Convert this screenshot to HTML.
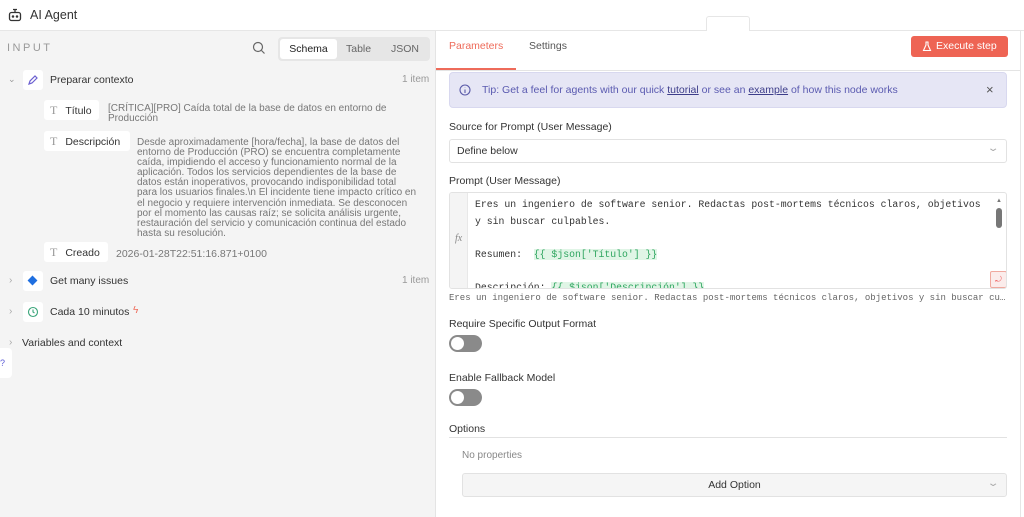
<!DOCTYPE html>
<html><head><meta charset="utf-8"><style>
*{box-sizing:border-box;margin:0;padding:0}
body{width:1024px;height:517px;overflow:hidden;background:#fff;font-family:"Liberation Sans",sans-serif;color:#444;position:relative;font-size:11px}
.a{position:absolute}
.tag{position:absolute;background:#fff;border-radius:3px;height:20px;font-size:10.5px;color:#333;line-height:20px;padding-left:6px}
.tag i{font-style:normal;color:#999;font-family:"Liberation Serif",serif;font-size:12px;margin-right:8px}
.mono{font-family:"Liberation Mono",monospace}
.tog{position:absolute;width:33px;height:17px;border-radius:9px;background:#8a8a8a}
.tog:after{content:"";position:absolute;left:2px;top:2px;width:13px;height:13px;border-radius:50%;background:#fff}
.lbl{position:absolute;left:449px;font-size:10.5px;color:#333}
</style></head><body>
<div class="a" style="left:0;top:0;width:1024px;height:31px;border-bottom:1px solid #e6e6e6;background:#fff"></div>
<svg class="a" style="left:8px;top:8px" width="14" height="14" viewBox="0 0 14 14" fill="none" stroke="#333" stroke-width="1.3"><rect x="1.5" y="4.5" width="11" height="8" rx="2"/><path d="M7 4.5V2M5 1.5h4"/><circle cx="5" cy="8.5" r=".6" fill="#333"/><circle cx="9" cy="8.5" r=".6" fill="#333"/></svg>
<div class="a" style="left:30px;top:8px;font-size:12.5px;color:#333">AI Agent</div>
<div class="a" style="left:706px;top:16px;width:44px;height:15px;border:1px solid #e6e6e6;border-bottom:none;background:#fff;border-radius:3px 3px 0 0"></div>
<div class="a" style="left:0;top:31px;width:436px;height:486px;background:#f4f4f4;border-right:1px solid #e4e4e4"></div>
<div class="a" style="left:7px;top:42px;font-size:11px;letter-spacing:2.5px;color:#9a9a9a">INPUT</div>
<svg class="a" style="left:252px;top:41px" width="14" height="14" viewBox="0 0 14 14" fill="none" stroke="#666" stroke-width="1.2"><circle cx="6" cy="6" r="4.5"/><path d="M9.5 9.5l3 3"/></svg>
<div class="a" style="left:278px;top:37px;width:152px;height:24px;background:#e6e6e6;border-radius:4px"></div>
<div class="a" style="left:280px;top:39px;width:57px;height:20px;background:#fff;border-radius:3px;font-size:10.5px;color:#222;text-align:center;line-height:20px">Schema</div>
<div class="a" style="left:346px;top:43px;font-size:10.5px;color:#666">Table</div>
<div class="a" style="left:391px;top:43px;font-size:10.5px;color:#666">JSON</div>

<div class="a" style="left:8px;top:74px;font-size:9px;color:#999">⌄</div>
<div class="a" style="left:23px;top:70px;width:20px;height:20px;background:#fff;border-radius:3px"></div>
<svg class="a" style="left:27px;top:74px" width="12" height="12" viewBox="0 0 12 12" fill="none" stroke="#6b5fd0" stroke-width="1.2"><path d="M2 10l1-3 5-5 2 2-5 5z"/></svg>
<div class="a" style="left:50px;top:74px;font-size:10.5px;color:#333">Preparar contexto</div>
<div class="a" style="left:402px;top:74px;font-size:10px;color:#999">1 item</div>

<div class="tag" style="left:44px;top:100px;width:55px"><i>T</i>Título</div>
<div class="a" style="left:108px;top:104px;width:300px;font-size:10px;line-height:10px;color:#777">[CRÍTICA][PRO] Caída total de la base de datos en entorno de Producción</div>
<div class="tag" style="left:44px;top:131px;width:86px"><i>T</i>Descripción</div>
<div class="a" style="left:137px;top:138px;width:280px;font-size:10px;line-height:10.1px;color:#777">Desde aproximadamente [hora/fecha], la base de datos del entorno de Producción (PRO) se encuentra completamente caída, impidiendo el acceso y funcionamiento normal de la aplicación. Todos los servicios dependientes de la base de datos están inoperativos, provocando indisponibilidad total para los usuarios finales.\n El incidente tiene impacto crítico en el negocio y requiere intervención inmediata. Se desconocen por el momento las causas raíz; se solicita análisis urgente, restauración del servicio y comunicación continua del estado hasta su resolución.</div>
<div class="tag" style="left:44px;top:242px;width:64px"><i>T</i>Creado</div>
<div class="a" style="left:116px;top:248px;font-size:10.5px;color:#777">2026-01-28T22:51:16.871+0100</div>

<div class="a" style="left:9px;top:275px;font-size:10px;color:#aaa">›</div>
<div class="a" style="left:23px;top:271px;width:20px;height:20px;background:#fff;border-radius:3px"></div>
<div class="a" style="left:29px;top:277px;width:7px;height:7px;background:#1f6fe0;transform:rotate(45deg)"></div>
<div class="a" style="left:50px;top:275px;font-size:10.5px;color:#333">Get many issues</div>
<div class="a" style="left:402px;top:275px;font-size:10px;color:#999">1 item</div>

<div class="a" style="left:9px;top:306px;font-size:10px;color:#aaa">›</div>
<div class="a" style="left:23px;top:302px;width:20px;height:20px;background:#fff;border-radius:3px"></div>
<svg class="a" style="left:27px;top:306px" width="12" height="12" viewBox="0 0 12 12" fill="none" stroke="#3aa57a" stroke-width="1.1"><circle cx="6" cy="6" r="4.5"/><path d="M6 3.5V6l1.5 1"/></svg>
<div class="a" style="left:50px;top:306px;font-size:10.5px;color:#333">Cada 10 minutos</div>
<div class="a" style="left:133px;top:305px;font-size:10px;color:#ee6b5a">ϟ</div>

<div class="a" style="left:9px;top:337px;font-size:10px;color:#aaa">›</div>
<div class="a" style="left:22px;top:337px;font-size:10.5px;color:#333">Variables and context</div>
<div class="a" style="left:0;top:348px;width:12px;height:30px;background:#fff;border-radius:0 4px 4px 0;color:#5b5bd6;font-size:9px;line-height:30px">?</div>

<div class="a" style="left:1020px;top:31px;width:1px;height:486px;background:#e6e6e6"></div>
<div class="a" style="left:436px;top:70px;width:584px;height:1px;background:#e4e4e4"></div>
<div class="a" style="left:449px;top:40px;font-size:10.5px;color:#ee6b5a">Parameters</div>
<div class="a" style="left:436px;top:68px;width:80px;height:2px;background:#ee6b5a"></div>
<div class="a" style="left:529px;top:40px;font-size:10.5px;color:#555">Settings</div>
<div class="a" style="left:911px;top:36px;width:97px;height:21px;background:#ee6454;border-radius:3px;color:#fff;font-size:10.5px;line-height:21px;padding-left:25px">Execute step</div>
<svg class="a" style="left:922px;top:41px" width="10" height="11" viewBox="0 0 10 11" fill="none" stroke="#fff" stroke-width="1.1"><path d="M3.5 1h3M4 1v3L1.5 9.5h7L6 4V1"/></svg>

<div class="a" style="left:449px;top:72px;width:558px;height:36px;background:#e6e6f5;border:1px solid #d8d8ef;border-radius:4px"></div>
<svg class="a" style="left:459px;top:84px" width="12" height="12" viewBox="0 0 12 12" fill="none" stroke="#5a5aa8" stroke-width="1.1"><circle cx="6" cy="6" r="5"/><path d="M6 5.5V9M6 3.5v.2"/></svg>
<div class="a" style="left:482px;top:84px;font-size:10.5px;color:#5a5ab0">Tip: Get a feel for agents with our quick <u style="color:#3d3d8a">tutorial</u> or see an <u style="color:#3d3d8a">example</u> of how this node works</div>
<div class="a" style="left:986px;top:82px;font-size:13px;color:#555">×</div>

<div class="lbl" style="top:121px">Source for Prompt (User Message)</div>
<div class="a" style="left:449px;top:139px;width:558px;height:24px;border:1px solid #e2e2e2;border-radius:3px;font-size:10.5px;color:#333;line-height:22px;padding-left:7px">Define below</div>
<div class="a" style="left:989px;top:143px;font-size:10px;color:#aaa;transform:scaleX(1.5)">⌄</div>

<div class="lbl" style="top:175px">Prompt (User Message)</div>
<div class="a" style="left:449px;top:192px;width:558px;height:97px;border:1px solid #e2e2e2;border-radius:3px;overflow:hidden;background:#fff">
 <div class="a" style="left:0;top:0;width:18px;height:97px;background:#f4f4f4;border-right:1px solid #e8e8e8"></div>
 <div class="a" style="left:5px;top:40px;font-family:'Liberation Serif',serif;font-style:italic;font-size:10px;color:#888">fx</div>
 <div class="a mono" style="left:25px;top:4px;width:520px;font-size:9.8px;line-height:16.5px;color:#333;white-space:pre">Eres un ingeniero de software senior. Redactas post-mortems técnicos claros, objetivos
y sin buscar culpables.

Resumen:  <span style="background:#e0f5e6;color:#2ea55f">{{ $json['Título'] }}</span>

Descripción: <span style="background:#e0f5e6;color:#2ea55f">{{ $json['Descripción'] }}</span></div>
 <div class="a" style="left:546px;top:15px;width:6px;height:20px;background:#777;border-radius:3px"></div>
 <div class="a" style="left:546px;top:5px;font-size:6px;color:#777">▲</div>
 <div class="a" style="left:540px;top:78px;width:17px;height:17px;border:1px solid #f0a99f;background:#fbeceb;border-radius:2px;font-size:8px;color:#e66;text-align:center;line-height:15px">⤾</div>
</div>
<div class="a mono" style="left:449px;top:293px;width:558px;font-size:9px;color:#666;white-space:nowrap;overflow:hidden">Eres un ingeniero de software senior. Redactas post-mortems técnicos claros, objetivos y sin buscar cu…</div>

<div class="lbl" style="top:318px">Require Specific Output Format</div>
<div class="tog" style="left:449px;top:335px"></div>
<div class="lbl" style="top:372px">Enable Fallback Model</div>
<div class="tog" style="left:449px;top:389px"></div>
<div class="lbl" style="top:423px">Options</div>
<div class="a" style="left:449px;top:437px;width:558px;height:1px;background:#e2e2e2"></div>
<div class="a" style="left:462px;top:450px;font-size:10px;color:#888">No properties</div>
<div class="a" style="left:462px;top:473px;width:545px;height:24px;background:#f5f5f5;border:1px solid #e2e2e2;border-radius:3px;text-align:center;font-size:10.5px;color:#333;line-height:22px">Add Option</div>
<div class="a" style="left:989px;top:478px;font-size:10px;color:#aaa;transform:scaleX(1.5)">⌄</div>
</body></html>
